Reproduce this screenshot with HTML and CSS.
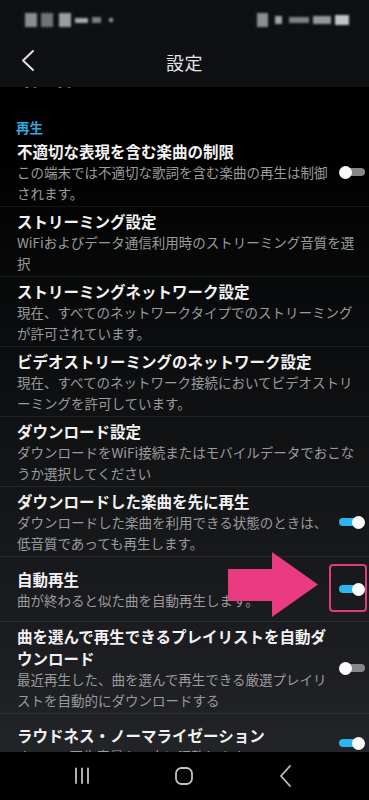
FILE: index.html
```html
<!DOCTYPE html>
<html lang="ja">
<head>
<meta charset="utf-8">
<title>設定</title>
<link rel="stylesheet" href="styles.css">
</head>
<body>
<div class="screen">
  <div class="status">
    <div class="blur-group">
      <span class="blk b1"></span><span class="blk b2"></span><span class="blk b3"></span><span class="blk b4"></span><span class="blk b5"></span><span class="blk b6"></span>
    </div>
    <div class="blur-group">
      <span class="blk r1"></span><span class="blk r2"></span><span class="blk r3"></span><span class="blk r4"></span><span class="blk r5"></span>
    </div>
  </div>
  <header class="appbar">
    <svg class="back" width="20" height="24" viewBox="0 0 20 24"><polyline points="14,2 4,11.5 14,21" fill="none" stroke="#e2e2e2" stroke-width="2" stroke-linecap="round" stroke-linejoin="round"/></svg>
    <h1 class="title">設定</h1>
  </header>
  <main class="list">
    <div class="peek"><span>オン・オフ</span></div>
    <div class="section">再生</div>

    <div class="item">
      <div class="text"><div class="t">不適切な表現を含む楽曲の制限</div><div class="s">この端末では不適切な歌詞を含む楽曲の再生は制御されます。</div></div>
      <div class="toggle off"><span class="track"></span><span class="thumb"></span></div>
    </div>
    <div class="item">
      <div class="text"><div class="t">ストリーミング設定</div><div class="s">WiFiおよびデータ通信利用時のストリーミング音質を選択</div></div>
    </div>
    <div class="item">
      <div class="text"><div class="t">ストリーミングネットワーク設定</div><div class="s">現在、すべてのネットワークタイプでのストリーミングが許可されています。</div></div>
    </div>
    <div class="item">
      <div class="text"><div class="t">ビデオストリーミングのネットワーク設定</div><div class="s">現在、すべてのネットワーク接続においてビデオストリーミングを許可しています。</div></div>
    </div>
    <div class="item">
      <div class="text"><div class="t">ダウンロード設定</div><div class="s">ダウンロードをWiFi接続またはモバイルデータでおこなうか選択してください</div></div>
    </div>
    <div class="item">
      <div class="text"><div class="t">ダウンロードした楽曲を先に再生</div><div class="s">ダウンロードした楽曲を利用できる状態のときは、低音質であっても再生します。</div></div>
      <div class="toggle on"><span class="track"></span><span class="thumb"></span></div>
    </div>
    <div class="item short">
      <div class="text"><div class="t">自動再生</div><div class="s">曲が終わると似た曲を自動再生します。</div></div>
      <div class="toggle on"><span class="track"></span><span class="thumb"></span></div>
      <svg class="arrow" width="92" height="66" viewBox="0 0 92 66"><polygon points="0,17 44,17 44,0 90,32.5 44,65 44,49 0,49" fill="#ea3a80"/></svg>
      <div class="hl"></div>
    </div>
    <div class="item">
      <div class="text"><div class="t">曲を選んで再生できるプレイリストを自動ダウンロード</div><div class="s">最近再生した、曲を選んで再生できる厳選プレイリストを自動的にダウンロードする</div></div>
      <div class="toggle off"><span class="track"></span><span class="thumb"></span></div>
    </div>
    <div class="item short last">
      <div class="text"><div class="t">ラウドネス・ノーマライゼーション</div><div class="s">すべての再生音量を一定に調整します</div></div>
      <div class="toggle on"><span class="track"></span><span class="thumb"></span></div>
    </div>
  </main>
  <nav class="navbar">
    <svg width="20" height="20" viewBox="0 0 20 20"><g stroke="#c4c4c4" stroke-width="1.8" stroke-linecap="round"><line x1="4" y1="2.5" x2="4" y2="17"/><line x1="10" y1="2.5" x2="10" y2="17"/><line x1="16" y1="2.5" x2="16" y2="17"/></g></svg>
    <svg width="20" height="20" viewBox="0 0 20 20"><rect x="2" y="2" width="16" height="16" rx="5.5" fill="none" stroke="#c4c4c4" stroke-width="1.8"/></svg>
    <svg width="20" height="24" viewBox="0 0 20 24"><polyline points="14,2 5,12 14,22" fill="none" stroke="#c4c4c4" stroke-width="1.8" stroke-linecap="round" stroke-linejoin="round"/></svg>
  </nav>
</div>
</body>
</html>
```

FILE: styles.css
```css
* { box-sizing: border-box; margin: 0; padding: 0; }
html, body { background: #000; }
body {
  font-family: "Noto Sans CJK JP", "Noto Sans", sans-serif;
  color: #f0f0f0;
}
.screen {
  width: 369px;
  height: 800px;
  display: flex;
  flex-direction: column;
  overflow: hidden;
  position: relative;
}
.status {
  height: 37px;
  background: #0e1014;
  display: flex;
  justify-content: space-between;
  align-items: center;
  padding: 3px 20px 0 25px;
}
.blur-group {
  display: flex;
  align-items: center;
  gap: 4px;
  filter: blur(0.8px);
}
.blk { display: block; background: #7c7f84; }
.b1 { width: 12px; height: 14px; background: #8a8c90; }
.b2 { width: 12px; height: 14px; background: #6f7276; }
.b3 { width: 12px; height: 14px; background: #9a9ca0; margin-left: 2px; }
.b4 { width: 13px; height: 5px; background: #a7a9ad; }
.b5 { width: 9px; height: 6px; background: #7b7e82; }
.b6 { width: 4px; height: 4px; background: #8d9094; margin-left: 4px; }
.r1 { width: 11px; height: 14px; background: #8b8e92; }
.r2 { width: 7px; height: 8px; background: #a3a5a8; margin-left: 3px; }
.r3 { width: 20px; height: 6px; background: #7e8185; margin-left: 3px; }
.r4 { width: 18px; height: 8px; background: #96989c; }
.r5 { width: 14px; height: 10px; background: #c2c4c7; }

.appbar {
  height: 50px;
  background: #0e1014;
  display: flex;
  align-items: center;
  justify-content: center;
  position: relative;
}
.back { position: absolute; left: 19px; top: 12px; }
.title {
  font-size: 18px;
  font-weight: 400;
  color: #e4e4e4;
  letter-spacing: 0.5px;
}
.list {
  flex: 1;
  overflow: hidden;
  position: relative;
  background: linear-gradient(#000 0px, #000 60px, #0a0b0c 230px, #141517 400px, #1c1d20 560px, #222428 665px);
}
.peek {
  height: 4px;
  overflow: hidden;
  padding-left: 21px;
}
.peek span {
  display: block;
  font-size: 11px;
  line-height: 14px;
  margin-top: -11px;
  color: #7a7a7a;
}
.section {
  margin-top: 26px;
  padding-left: 16px;
  font-size: 13.5px;
  line-height: 20px;
  font-weight: 700;
  color: #2ba9dd;
}
.item {
  display: flex;
  align-items: center;
  padding: 3px 4px 2px 17px;
  border-bottom: 1px solid rgba(255,255,255,0.075);
  position: relative;
}
.item.short { min-height: 65px; padding-top: 0; padding-bottom: 0; }
.item.last { min-height: 70px; border-bottom: none; align-items: flex-start; padding-top: 10px; }
.text { flex: 1; min-width: 0; }
.t {
  font-size: 15.5px;
  line-height: 22px;
  font-weight: 700;
  color: #f2f2f2;
}
.s {
  font-size: 13.5px;
  line-height: 21px;
  color: #9a9b9d;
}
.toggle {
  position: relative;
  width: 26px;
  height: 14px;
  margin-left: 6px;
  flex: none;
}
.item.last .toggle { margin-top: 12px; }
.track {
  position: absolute;
  top: 3px;
  width: 20px;
  height: 8px;
  border-radius: 4px;
}
.thumb {
  position: absolute;
  top: 0.5px;
  width: 13px;
  height: 13px;
  border-radius: 50%;
  background: #fafafa;
}
.toggle.off .track { right: 0; background: #86878a; }
.toggle.off .thumb { left: 0; }
.toggle.on .track { left: 0; background: #2bb6ec; }
.toggle.on .thumb { right: 0; }
.arrow { position: absolute; left: 228px; top: -5px; }
.hl {
  position: absolute;
  left: 329px;
  top: 7px;
  width: 38px;
  height: 48px;
  border: 2px solid #de3a7c;
  border-radius: 4px;
}
.navbar {
  height: 48px;
  background: #000;
  display: flex;
  align-items: center;
  justify-content: space-between;
  padding: 0 73px 0 72px;
}
```
